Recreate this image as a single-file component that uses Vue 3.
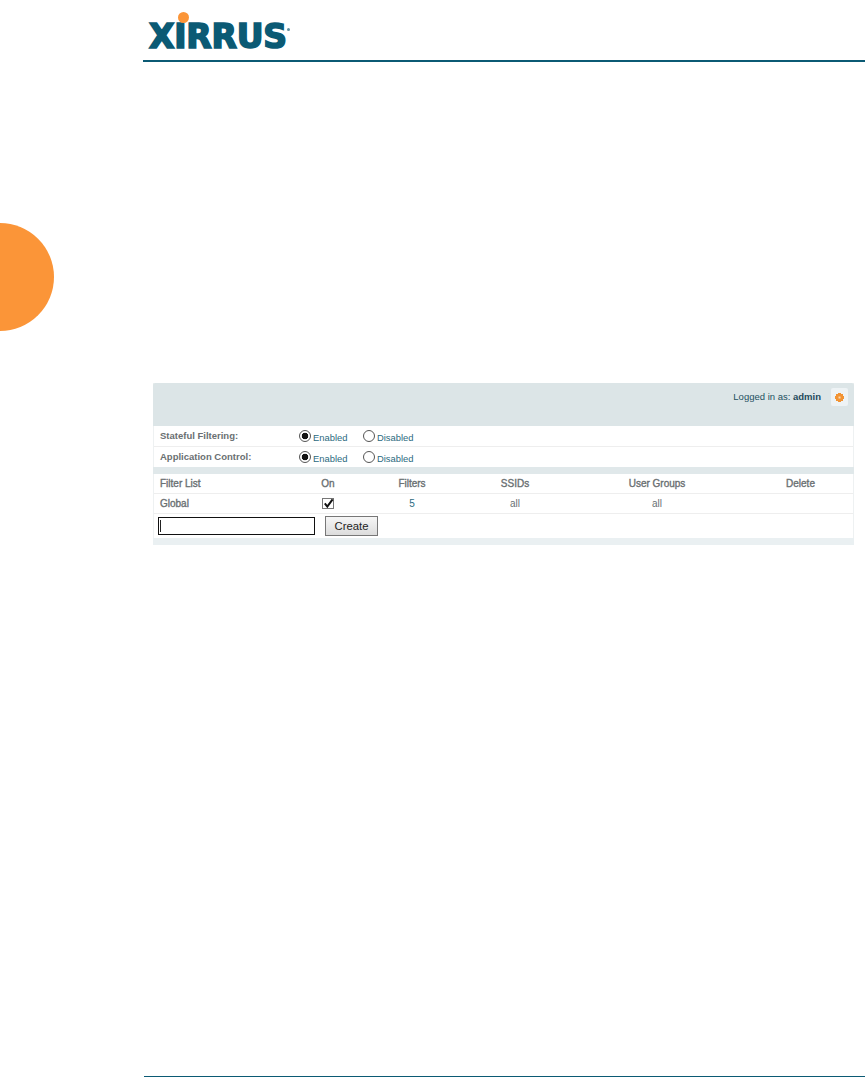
<script setup>
const columns = ['Filter List', 'On', 'Filters', 'SSIDs', 'User Groups', 'Delete']
const toggles = [
  { label: 'Stateful Filtering:', name: 'stateful' },
  { label: 'Application Control:', name: 'appcontrol' }
]
</script>

<template>
  <div class="page">
    <div class="tab" aria-hidden="true"></div>
    <header class="header">
      <div class="logo">
        <span class="word">XIRRUS</span>
        <span class="dot"></span>
        <span class="reg"></span>
      </div>
    </header>

    <section class="panel">
      <div class="top">
        <span class="login">Logged in as: <b>admin</b></span>
        <span class="gear-box">
          <svg width="9" height="9" viewBox="0 0 9 9">
            <path d="M3 0h3v1h2v2h1v3H8v2H6v1H3V8H1V6H0V3h1V1h2z" fill="#f29333"/>
            <rect x="3.5" y="3.5" width="2" height="2" fill="#f8dcb8"/>
          </svg>
        </span>
      </div>

      <div v-for="t in toggles" :key="t.name" class="toggle">
        <span class="toggle-label">{{ t.label }}</span>
        <label class="opt opt-on"><input type="radio" :name="t.name" checked><span>Enabled</span></label>
        <label class="opt"><input type="radio" :name="t.name"><span>Disabled</span></label>
      </div>

      <div class="band"></div>

      <div class="row head">
        <span v-for="c in columns" :key="c" class="cell">{{ c }}</span>
      </div>
      <div class="row body">
        <span class="cell strong">Global</span>
        <span class="cell"><span class="check">
          <svg width="11" height="11" viewBox="0 0 11 11"><path d="M1.8 5.4 4.3 8.6 9.6 1.3" fill="none" stroke="#111" stroke-width="2"/></svg>
        </span></span>
        <span class="cell teal">5</span>
        <span class="cell">all</span>
        <span class="cell">all</span>
        <span class="cell"></span>
      </div>
      <div class="create">
        <input class="name" type="text">
        <button class="btn" type="button">Create</button>
      </div>
      <div class="band-end"></div>
    </section>

    <footer class="foot"></footer>
  </div>
</template>

<style>
html, body { margin: 0; background: #fff; }
</style>

<style scoped>
.page {
  position: relative;
  width: 865px;
  height: 1077px;
  overflow: hidden;
  background: #fff;
  display: flex;
  flex-direction: column;
  font-family: "Liberation Sans", Arial, sans-serif;
}
.tab {
  position: absolute;
  left: -55px;
  top: 223px;
  width: 109px;
  height: 108px;
  border-radius: 50%;
  background: #fb9538;
}
.header {
  height: 60px;
  margin-left: 143px;
  border-bottom: 2px solid #0b5a74;
  flex: none;
}
.logo {
  position: relative;
  width: 150px;
  height: 60px;
}
.word {
  position: absolute;
  left: 6px;
  top: 17px;
  font-family: "DejaVu Sans", sans-serif;
  font-weight: 700;
  font-size: 33px;
  line-height: 40px;
  color: #0b5a74;
  -webkit-text-stroke: 1.7px #0b5a74;
  letter-spacing: -0.2px;
}
.dot {
  position: absolute;
  left: 35px;
  top: 12px;
  width: 11px;
  height: 11px;
  border-radius: 50%;
  background: #fb9538;
}
.reg {
  position: absolute;
  left: 144px;
  top: 28px;
  width: 3px;
  height: 3px;
  border-radius: 50%;
  background: #5f8fa0;
}
.panel {
  margin: 321px 0 0 153px;
  width: 701px;
  height: 162px;
  flex: none;
  box-sizing: border-box;
  border-right: 1px solid #eef1f2;
  border-left: 1px solid #eef1f2;
  font-size: 10px;
  color: #6a7072;
  display: flex;
  flex-direction: column;
}
.top {
  height: 43px;
  flex: none;
  margin: 0 -1px;
  background: #dce5e7;
  border-radius: 2px 2px 0 0;
  display: flex;
  justify-content: flex-end;
  align-items: flex-start;
  color: #24505f;
}
.login { margin: 8px 10px 0 0; font-size: 9.5px; line-height: 12px; }
.login b { color: #1d4a5b; }
.gear-box {
  width: 17px;
  height: 18px;
  margin: 5px 6px 0 0;
  background: #eef3f5;
  border-radius: 2px;
  display: flex;
  align-items: center;
  justify-content: center;
}
.toggle {
  height: 20px;
  flex: none;
  border-bottom: 1px solid #eeeeee;
  display: flex;
  align-items: center;
  padding-left: 6px;
}
.toggle:nth-of-type(3) { border-bottom: 0; }
.toggle-label { width: 140px; font-size: 9.5px; font-weight: 700; margin-top: -2px; }
.opt {
  display: flex;
  align-items: center;
  color: #2c6a80;
  font-size: 9.4px;
}
.opt span { margin: 3px 0 0 2px; }
.opt-on { width: 64px; }
.opt input {
  appearance: none;
  width: 12px;
  height: 12px;
  margin: 0 0 0 -1px;
  border: 1px solid #555;
  border-radius: 50%;
  background: #fff;
  box-sizing: border-box;
}
.opt input:checked {
  background: radial-gradient(circle, #111 0 3px, #fff 3.6px);
}
.band {
  height: 7px;
  flex: none;
  margin: 0 -1px;
  background: #e0e8ea;
}
.row {
  display: grid;
  grid-template-columns: 142px 64px 104px 102px 182px 1fr;
  flex: none;
  align-items: center;
  border-bottom: 1px solid #eeeeee;
}
.head { height: 19px; -webkit-text-stroke: 0.35px #6a7072; }
.body { height: 19px; }
.cell { text-align: center; }
.cell:first-child { text-align: left; padding-left: 6px; }
.strong { -webkit-text-stroke: 0.35px #6a7072; }
.teal { color: #2c6a80; }
.check {
  display: inline-flex;
  width: 12px;
  height: 11px;
  border: 1px solid #777;
  box-sizing: border-box;
  align-items: center;
  justify-content: center;
  vertical-align: middle;
}
.check svg { flex: none; }
.create {
  height: 24px;
  flex: none;
  display: flex;
  align-items: center;
  padding-left: 4px;
}
.name {
  width: 157px;
  height: 18px;
  box-sizing: border-box;
  border: 1px solid #111;
  padding: 0;
  margin: 0;
  outline: none;
  background: linear-gradient(#222, #222) 1px 2px / 1px 12px no-repeat #fff;
}
.btn {
  margin-left: 10px;
  width: 53px;
  height: 20px;
  padding: 0;
  border: 1px solid #777;
  background: linear-gradient(#f6f6f6, #dcdcdc);
  font: 11.3px "Liberation Sans", Arial, sans-serif;
  color: #222;
}
.band-end {
  height: 7px;
  flex: none;
  margin: 0 -1px;
  background: #eaf0f2;
}
.foot {
  margin: 531px 0 0 144px;
  height: 1px;
  flex: none;
  background: #0b5a74;
}
</style>
